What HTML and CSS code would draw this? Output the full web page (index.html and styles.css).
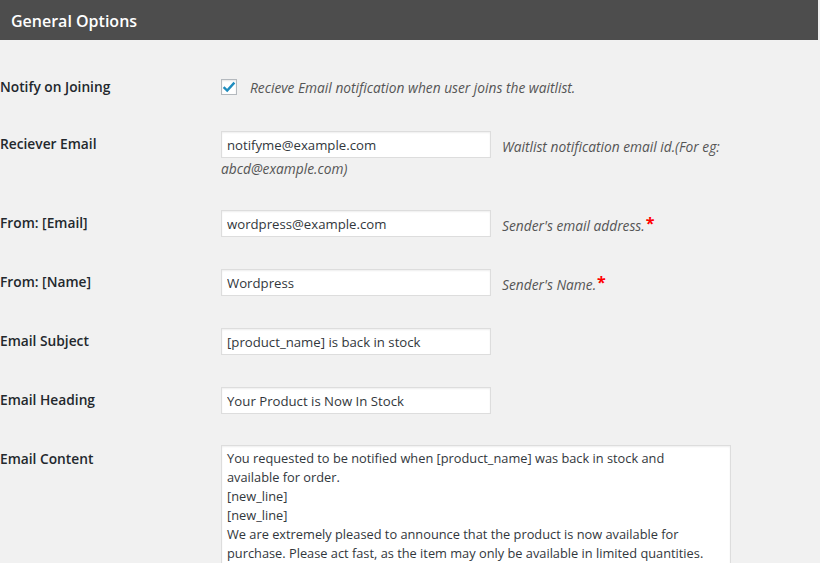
FILE: index.html
```html
<!DOCTYPE html>
<html lang="en">
<head>
<meta charset="utf-8">
<title>General Options</title>
<link rel="stylesheet" href="styles.css">
</head>
<body>
<header class="bar"><h2 class="bar-title">General Options</h2></header>
<div class="form">
  <div class="row row-check">
    <div class="label">Notify on Joining</div>
    <div class="field">
      <label class="check">
        <span class="box"><svg class="tick" width="16" height="16" viewBox="0 0 16 16"><path d="M2.6 8.2 L6.2 11.6 L13.4 3.6" fill="none" stroke="#1e8cbe" stroke-width="2.4" stroke-linejoin="miter"/></svg></span>
        <span class="desc">Recieve Email notification when user joins the waitlist.</span>
      </label>
    </div>
  </div>
  <div class="row row-wrap">
    <div class="label">Reciever Email</div>
    <div class="field"><input class="input" type="text" value="notifyme@example.com"><span class="desc">Waitlist notification email id.(For eg: abcd@example.com)</span></div>
  </div>
  <div class="row">
    <div class="label">From: [Email]</div>
    <div class="field"><input class="input" type="text" value="wordpress@example.com"><span class="desc">Sender's email address.<span class="req">*</span></span></div>
  </div>
  <div class="row">
    <div class="label">From: [Name]</div>
    <div class="field"><input class="input" type="text" value="Wordpress"><span class="desc">Sender's Name.<span class="req">*</span></span></div>
  </div>
  <div class="row">
    <div class="label">Email Subject</div>
    <div class="field"><input class="input" type="text" value="[product_name] is back in stock"></div>
  </div>
  <div class="row">
    <div class="label">Email Heading</div>
    <div class="field"><input class="input" type="text" value="Your Product is Now In Stock"></div>
  </div>
  <div class="row row-area">
    <div class="label">Email Content</div>
    <div class="field"><textarea class="area">You requested to be notified when [product_name] was back in stock and available for order.
[new_line]
[new_line]
We are extremely pleased to announce that the product is now available for purchase. Please act fast, as the item may only be available in limited quantities.</textarea></div>
  </div>
</div>
</body>
</html>
```
FILE: styles.css
```css
html, body {
  margin: 0;
  background: #f1f1f1;
  font-family: "Open Sans", "Noto Sans", sans-serif;
  color: #23282d;
  overflow: hidden;
}
.bar {
  background: #4d4d4d;
  height: 40px;
  margin-right: 2px;
  display: flex;
  align-items: center;
  padding-left: 11px;
}
.bar-title {
  margin: 1px 0 0;
  color: #fff;
  font-size: 16px;
  font-weight: 600;
}
.form {
  padding-top: 20px;
  padding-right: 10px;
}
.row {
  display: flex;
  align-items: flex-start;
  padding: 16px 0;
}
.row-check {
  padding-bottom: 17px;
}
.row-wrap {
  padding-bottom: 14px;
}
.row-area {
  padding-top: 15px;
}
.label {
  width: 221px;
  flex: none;
  padding-top: 3px;
  line-height: 20px;
  font-size: 13.75px;
  font-weight: 600;
  color: #23282d;
}
.row-check .label {
  padding-top: 1px;
}
.row-area .label {
  padding-top: 4px;
}
.field {
  flex: 1;
  font-size: 13.75px;
  line-height: 22px;
}
.check {
  display: flex;
  align-items: center;
  height: 22px;
}
.box {
  box-sizing: border-box;
  width: 16px;
  height: 16px;
  border: 1px solid #b4b9be;
  background: #fff;
  box-shadow: inset 0 1px 2px rgba(0,0,0,.1);
  margin-right: 13px;
  display: flex;
  align-items: center;
  justify-content: center;
}
.tick {
  flex: none;
}
.input {
  box-sizing: border-box;
  width: 270px;
  height: 27px;
  border: 1px solid #ddd;
  background: #fff;
  box-shadow: inset 0 1px 2px rgba(0,0,0,.07);
  font-family: "Open Sans", "Noto Sans", sans-serif;
  font-size: 13.2px;
  color: #32373c;
  padding: 0 5px;
  margin: 0 11px 0 0;
  vertical-align: 2px;
  outline: none;
}
.desc {
  font-style: italic;
  color: #555;
}
.check .desc {
  padding-top: 2px;
}
.req {
  color: #f00;
  font-style: normal;
  font-weight: 700;
  font-size: 16px;
  vertical-align: 2px;
  line-height: 0;
  margin-left: 1px;
}
.area {
  box-sizing: border-box;
  display: block;
  width: 510px;
  height: 160px;
  border: 1px solid #ddd;
  background: #fff;
  box-shadow: inset 0 1px 2px rgba(0,0,0,.07);
  font-family: "Open Sans", "Noto Sans", sans-serif;
  font-size: 12.8px;
  line-height: 19px;
  color: #32373c;
  padding: 3px 11px 3px 5px;
  resize: none;
  overflow: hidden;
  outline: none;
}
```
